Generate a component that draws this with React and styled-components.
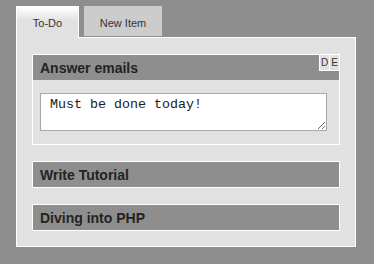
import React from 'react';
import styled, { createGlobalStyle } from 'styled-components';

const GlobalStyle = createGlobalStyle`
    * { box-sizing: border-box; }
    body {
        margin: 0;
        background: #8e8e8e;
        font-family: "Liberation Sans", Arial, sans-serif;
    }
`

const todos = [
    { title: 'Answer emails', note: 'Must be done today!', open: true },
    { title: 'Write Tutorial' },
    { title: 'Diving into PHP' },
]

const App = () => {
    return (
        <>
            <GlobalStyle />
            <Page>
                <TabBar>
                    <Tab active>To-Do</Tab>
                    <Tab>New Item</Tab>
                </TabBar>
                <Panel>
                    {todos.map(todo => (
                        <Item key={todo.title}>
                            <ItemHeader>{todo.title}</ItemHeader>
                            {todo.open && <>
                                <Actions>
                                    <ActionButton>D</ActionButton>
                                    <ActionButton>E</ActionButton>
                                </Actions>
                                <ItemBody>
                                    <Note defaultValue={todo.note} />
                                </ItemBody>
                            </>}
                        </Item>
                    ))}
                </Panel>
            </Page>
        </>
    );
};

export default App;

const Page = styled.div`
    padding: 6px 0 0 16px;
    width: 356px;
`

const TabBar = styled.div`
    display: flex;
    align-items: flex-start;
    gap: 5px;
    height: 32px;
    margin-bottom: -1px;
`

// active tab sits over the panel's top border
const Tab = styled.div`
    position: relative;
    z-index: 1;
    width: ${p => p.active ? '63px' : '78px'};
    height: ${p => p.active ? '32px' : '30px'};
    padding-top: ${p => p.active ? '10px' : '11px'};
    font-size: 11px;
    line-height: 13px;
    text-align: center;
    color: #333;
    white-space: nowrap;
    background: ${p => p.active ? 'linear-gradient(#ffffff, #e1e1e1 45%)' : '#cccccc'};
    border: ${p => p.active ? '1px solid #fff' : 'none'};
    border-bottom: none;
`

const Panel = styled.div`
    width: 340px;
    height: 210px;
    background: #e1e1e1;
    border: 1px solid #fff;
    padding: 16px 15px 15px;
    display: flex;
    flex-direction: column;
    gap: 16px;
`

const Item = styled.div`
    position: relative;
    border: 1px solid #fff;
`

const ItemHeader = styled.div`
    height: 25px;
    padding: 0 7px;
    background: #8e8e8e;
    color: #232323;
    font-size: 14px;
    font-weight: bold;
    line-height: 26px;
`

const Actions = styled.div`
    position: absolute;
    top: -1px;
    right: -1px;
    display: flex;
    gap: 1px;
    background: #fff;
    border: 1px solid #fff;
`

const ActionButton = styled.div`
    width: 9px;
    height: 15px;
    background: #e1e1e1;
    color: #333;
    font-size: 10px;
    line-height: 15px;
    text-align: center;
`

const ItemBody = styled.div`
    padding: 13px 12px 13px 7px;
`

const Note = styled.textarea`
    display: block;
    width: 287px;
    height: 38px;
    margin: 0;
    padding: 3px 9px;
    border: 1px solid #a8a8a8;
    background: #fff;
    color: #1a1a1a;
    font-family: "Liberation Mono", "Courier New", monospace;
    font-size: 13.333px;
    outline: none;
`
